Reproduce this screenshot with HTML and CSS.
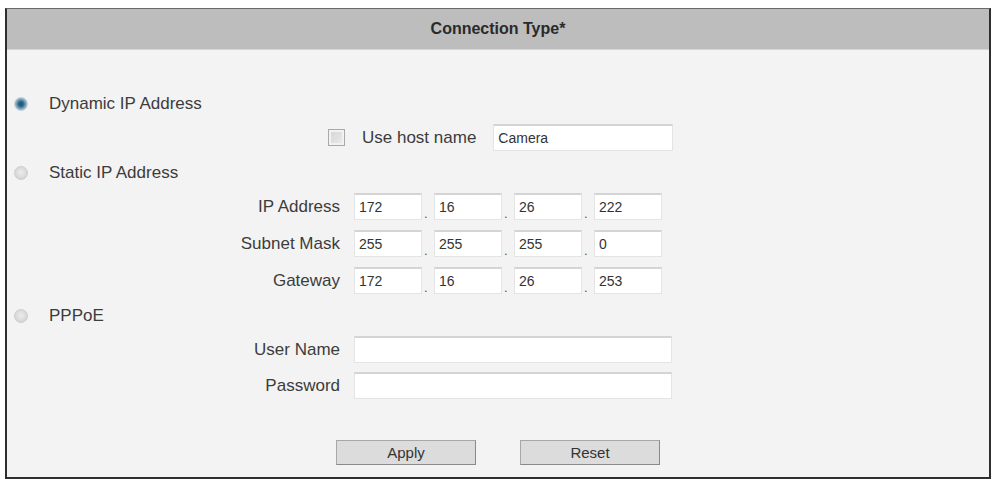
FILE: index.html
```html
<!DOCTYPE html>
<html>
<head>
<meta charset="utf-8">
<link rel="stylesheet" href="styles.css">
</head>
<body>
<div class="frame">
  <div class="header">Connection Type*</div>
  <div class="content">
    <div class="radio-row">
      <span class="radio on"></span><span class="radio-label">Dynamic IP Address</span>
    </div>
    <div class="host-row">
      <span class="check"></span>
      <span class="host-label">Use host name</span>
      <div class="input host-input">Camera</div>
    </div>
    <div class="radio-row r2">
      <span class="radio"></span><span class="radio-label">Static IP Address</span>
    </div>
    <div class="ip-block">
      <div class="field-row">
        <span class="lbl">IP Address</span>
        <div class="ip"><div class="input oct">172</div><span class="dot">.</span><div class="input oct">16</div><span class="dot">.</span><div class="input oct">26</div><span class="dot">.</span><div class="input oct">222</div></div>
      </div>
      <div class="field-row">
        <span class="lbl">Subnet Mask</span>
        <div class="ip"><div class="input oct">255</div><span class="dot">.</span><div class="input oct">255</div><span class="dot">.</span><div class="input oct">255</div><span class="dot">.</span><div class="input oct">0</div></div>
      </div>
      <div class="field-row">
        <span class="lbl">Gateway</span>
        <div class="ip"><div class="input oct">172</div><span class="dot">.</span><div class="input oct">16</div><span class="dot">.</span><div class="input oct">26</div><span class="dot">.</span><div class="input oct">253</div></div>
      </div>
    </div>
    <div class="radio-row r3">
      <span class="radio"></span><span class="radio-label">PPPoE</span>
    </div>
    <div class="ppp-block">
      <div class="field-row">
        <span class="lbl">User Name</span>
        <div class="input wide"></div>
      </div>
      <div class="field-row">
        <span class="lbl">Password</span>
        <div class="input wide"></div>
      </div>
    </div>
    <div class="buttons">
      <div class="btn">Apply</div>
      <div class="btn">Reset</div>
    </div>
  </div>
</div>
</body>
</html>
```
FILE: styles.css
```css
html, body {
  margin: 0;
  padding: 0;
  background: #ffffff;
}
body {
  font-family: "Liberation Sans", Arial, sans-serif;
  color: #3c3c3c;
}
.frame {
  margin: 8px 0 0 5px;
  width: 982px;
  height: 468px;
  border: 2px solid #2e2e2e;
  border-top: 1px solid #6a6a6a;
  background: #f3f3f3;
  display: flex;
  flex-direction: column;
}
.header {
  height: 40px;
  background: #bdbdbd;
  border-bottom: 1px solid #d6d6d6;
  display: flex;
  align-items: center;
  justify-content: center;
  font-weight: bold;
  font-size: 16px;
  color: #2a2a2a;
}
.content {
  display: flex;
  flex-direction: column;
  padding-top: 42px;
}
.radio-row {
  height: 24px;
  display: flex;
  align-items: center;
  padding-left: 7px;
}
.radio-row.r2 { margin-top: 10px; }
.radio-row.r3 { margin-top: 10px; }
.radio {
  width: 14px;
  height: 14px;
  border-radius: 50%;
  box-sizing: border-box;
  background: radial-gradient(circle at 50% 45%, #ececec 0%, #dcdcdc 50%, #c8c8c8 100%);
  border: 1px solid #cfcfcf;
}
.radio.on {
  background: radial-gradient(circle at 50% 50%, #1a4f6e 0%, #2d6a8d 30%, #86a8bd 58%, #d6e1e8 100%);
  border: 1px solid #c2d0da;
}
.radio-label {
  margin-left: 21px;
  font-size: 17px;
}
.host-row {
  margin-top: 8px;
  height: 27px;
  display: flex;
  align-items: center;
  padding-left: 321px;
}
.check {
  width: 17px;
  height: 17px;
  box-sizing: border-box;
  border: 1px solid #a9a9a9;
  background: linear-gradient(135deg, #d4d4d4, #ececec);
  box-shadow: inset 0 0 0 2px #f2f2f2;
}
.host-label {
  margin-left: 17px;
  font-size: 17px;
}
.input {
  box-sizing: border-box;
  height: 27px;
  background: #ffffff;
  border: 1px solid #e4e4e4;
  border-top: 2px solid #d4d4d4;
  font-size: 14px;
  color: #333;
  padding-left: 4px;
  display: flex;
  align-items: center;
}
.host-input {
  margin-left: 17px;
  width: 180px;
}
.ip-block {
  margin-top: 8px;
  display: flex;
  flex-direction: column;
  gap: 10px;
}
.field-row {
  display: flex;
  align-items: center;
  height: 27px;
}
.lbl {
  width: 333px;
  text-align: right;
  font-size: 17px;
  margin-right: 14px;
}
.ip {
  display: flex;
  align-items: stretch;
}
.oct { width: 68px; }
.dot {
  width: 12px;
  box-sizing: border-box;
  padding-left: 2px;
  font-size: 13px;
  line-height: 1;
  display: flex;
  align-items: flex-end;
  color: #555;
}
.ppp-block {
  margin-top: 8px;
  display: flex;
  flex-direction: column;
  gap: 9px;
}
.wide { width: 318px; }
.buttons {
  margin-top: 41px;
  display: flex;
  gap: 44px;
  padding-left: 329px;
}
.btn {
  width: 140px;
  height: 25px;
  box-sizing: border-box;
  background: #dcdcdc;
  border: 1px solid #8a8a8a;
  border-top-color: #a8a8a8;
  border-left-color: #a8a8a8;
  display: flex;
  align-items: center;
  justify-content: center;
  font-size: 15px;
  color: #333;
}
```
